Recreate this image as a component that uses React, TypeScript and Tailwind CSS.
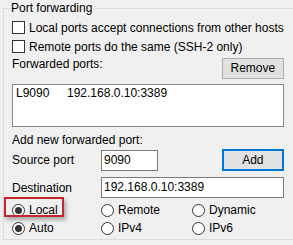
import React from 'react';

function CheckBox({ label }: { label: string }) {
  return (
    <label className="flex items-center h-[17px]">
      <span className="w-[13px] h-[13px] border border-[#333333] bg-white shrink-0" />
      <span className="ml-[4px] whitespace-nowrap">{label}</span>
    </label>
  );
}

function Radio({ label, checked = false }: { label: string; checked?: boolean }) {
  return (
    <span className="flex items-center h-[18px]">
      <span className="w-[13px] h-[13px] rounded-full border border-[#333333] bg-white shrink-0 flex items-center justify-center">
        {checked && <span className="w-[7px] h-[7px] rounded-full bg-[#333333]" />}
      </span>
      <span className="ml-[4px] whitespace-nowrap">{label}</span>
    </span>
  );
}

export default function App() {
  return (
    <div className="w-[293px] h-[245px] bg-[#f0f0f0] text-[12px] leading-[16px] text-black font-['Liberation_Sans',Arial,sans-serif] overflow-hidden">
      <fieldset className="ml-[3px] w-[286px] h-[240px] border border-[#dcdcdc] pl-[8px] pr-[9px]">
        <legend className="-ml-[2px] px-[1px]">Port forwarding</legend>

        <div className="mt-[3px]">
          <CheckBox label="Local ports accept connections from other hosts" />
        </div>
        <div className="mt-[2px]">
          <CheckBox label="Remote ports do the same (SSH-2 only)" />
        </div>

        <div className="mt-[1px] flex justify-between items-start">
          <span>Forwarded ports:</span>
          <button className="mt-[2px] w-[62px] h-[21px] border border-[#adadad] bg-[#e1e1e1] leading-[19px]">
            Remove
          </button>
        </div>

        <div className="mt-[5px] h-[43px] border border-[#828790] bg-white pl-[3px] flex">
          <span className="w-[51px]">L9090</span>
          <span>192.168.0.10:3389</span>
        </div>

        <div className="mt-[5px]">Add new forwarded port:</div>

        <div className="flex items-center h-[24px]">
          <span className="w-[89px]">Source port</span>
          <span className="w-[57px] h-[21px] border border-[#7a7a7a] bg-white pl-[2px] leading-[19px]">9090</span>
          <button className="ml-auto w-[62px] h-[22px] border-2 border-[#0078d7] bg-[#e1e1e1] leading-[18px]">
            Add
          </button>
        </div>

        <div className="mt-[5px] flex items-center h-[21px]">
          <span className="w-[89px]">Destination</span>
          <span className="flex-1 h-[21px] border border-[#7a7a7a] bg-white pl-[2px] leading-[19px]">192.168.0.10:3389</span>
        </div>

        <div className="mt-[3px] grid grid-cols-[89px_91px_1fr]">
          <span className="relative">
            <Radio label="Local" checked />
            <span className="absolute left-[-8px] top-[-4px] w-[60px] h-[20px] border-2 border-[#c0282e] shadow-[2px_3px_4px_rgba(0,0,0,0.3)]" />
          </span>
          <Radio label="Remote" />
          <Radio label="Dynamic" />
          <Radio label="Auto" checked />
          <Radio label="IPv4" />
          <Radio label="IPv6" />
        </div>
      </fieldset>
    </div>
  );
}
